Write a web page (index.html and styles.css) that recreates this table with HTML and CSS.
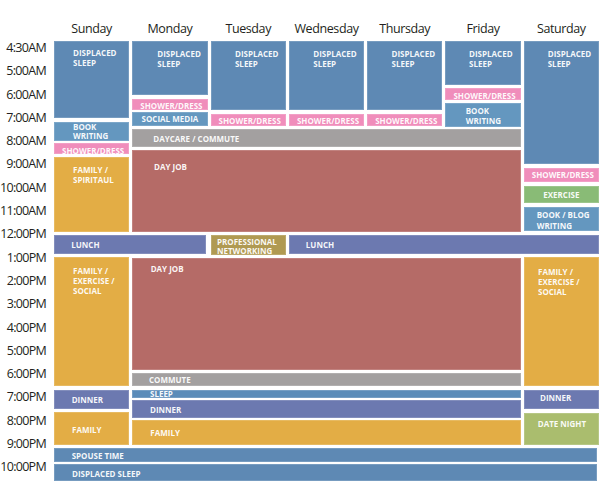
FILE: index.html
```html
<!DOCTYPE html>
<html lang="en">
<head>
<meta charset="utf-8">
<title>Weekly schedule</title>
<link rel="stylesheet" href="styles.css">
</head>
<body>
<div class="page">
  <div class="corner"></div>
  <div class="days">
    <div>Sunday</div><div>Monday</div><div>Tuesday</div><div>Wednesday</div><div>Thursday</div><div>Friday</div><div>Saturday</div>
  </div>
  <div class="times">
    <div>4:30AM</div><div>5:00AM</div><div>6:00AM</div><div>7:00AM</div><div>8:00AM</div><div>9:00AM</div><div>10:00AM</div><div>11:00AM</div><div>12:00PM</div><div>1:00PM</div><div>2:00PM</div><div>3:00PM</div><div>4:00PM</div><div>5:00PM</div><div>6:00PM</div><div>7:00PM</div><div>8:00PM</div><div>9:00PM</div><div>10:00PM</div>
  </div>
  <div class="board">
    <div class="blk c-sleep sun-sleep">DISPLACED<br>SLEEP</div>
    <div class="blk c-write sun-book">BOOK<br>WRITING</div>
    <div class="blk c-pink shower sun-shower">SHOWER/DRESS</div>
    <div class="blk c-gold sun-fam1">FAMILY /<br>SPIRITAUL</div>
    <div class="blk c-purple lunch-a">LUNCH</div>
    <div class="blk c-gold sun-fam2">FAMILY /<br>EXERCISE /<br>SOCIAL</div>
    <div class="blk c-purple sun-dinner">DINNER</div>
    <div class="blk c-gold sun-family">FAMILY</div>

    <div class="blk c-sleep mon-sleep">DISPLACED<br>SLEEP</div>
    <div class="blk c-pink shower mon-shower">SHOWER/DRESS</div>
    <div class="blk c-write mon-social">SOCIAL MEDIA</div>

    <div class="blk c-sleep mid-sleep tue">DISPLACED<br>SLEEP</div>
    <div class="blk c-pink shower mid-shower tue">SHOWER/DRESS</div>
    <div class="blk c-sleep mid-sleep wed">DISPLACED<br>SLEEP</div>
    <div class="blk c-pink shower mid-shower wed">SHOWER/DRESS</div>
    <div class="blk c-sleep mid-sleep thu">DISPLACED<br>SLEEP</div>
    <div class="blk c-pink shower mid-shower thu">SHOWER/DRESS</div>

    <div class="blk c-sleep fri-sleep">DISPLACED<br>SLEEP</div>
    <div class="blk c-pink shower fri-shower">SHOWER/DRESS</div>
    <div class="blk c-write fri-book">BOOK<br>WRITING</div>

    <div class="blk c-sleep sat-sleep">DISPLACED<br>SLEEP</div>
    <div class="blk c-pink shower sat-shower">SHOWER/DRESS</div>
    <div class="blk c-green sat-exercise">EXERCISE</div>
    <div class="blk c-write sat-book">BOOK / BLOG<br>WRITING</div>

    <div class="blk c-gray daycare">DAYCARE / COMMUTE</div>
    <div class="blk c-red dayjob-am">DAY JOB</div>
    <div class="blk c-olive networking">PROFESSIONAL<br>NETWORKING</div>
    <div class="blk c-purple lunch-b">LUNCH</div>
    <div class="blk c-red dayjob-pm">DAY JOB</div>
    <div class="blk c-gray commute">COMMUTE</div>
    <div class="blk c-evsleep ev-sleep">SLEEP</div>
    <div class="blk c-purple wk-dinner">DINNER</div>
    <div class="blk c-gold wk-family">FAMILY</div>

    <div class="blk c-gold sat-fam">FAMILY /<br>EXERCISE /<br>SOCIAL</div>
    <div class="blk c-purple sat-dinner">DINNER</div>
    <div class="blk c-lime sat-date">DATE NIGHT</div>

    <div class="blk c-sleep spouse">SPOUSE TIME</div>
    <div class="blk c-sleep night-sleep">DISPLACED SLEEP</div>
  </div>
</div>
</body>
</html>
```
FILE: styles.css
```css
* { box-sizing: border-box; }

body {
  margin: 0;
  background: #ffffff;
  font-family: "Open Sans", "DejaVu Sans", sans-serif;
  color: #231f20;
}

.page {
  display: grid;
  grid-template-columns: 46px 545px;
  column-gap: 8px;
  padding-top: 20.6px;
}

.days {
  display: grid;
  grid-template-columns: repeat(7, 1fr);
  column-gap: 3px;
  height: 20.4px;
  font-size: 12.5px;
  line-height: 15px;
  letter-spacing: -0.4px;
  text-align: center;
}

.times {
  margin-top: -5px;
  font-size: 12.5px;
  letter-spacing: -0.7px;
  text-align: right;
}

.times div {
  height: 23.3px;
  line-height: 23.3px;
  white-space: nowrap;
}

.board {
  display: grid;
  grid-template-columns: repeat(7, 1fr);
  grid-template-rows: repeat(440, 1px);
  column-gap: 3px;
}

.blk {
  font-weight: 700;
  font-size: 8px;
  line-height: 10px;
  color: rgba(255, 255, 255, 0.94);
  white-space: nowrap;
  box-shadow: inset 0 0 0 1px rgba(255, 255, 255, 0.16);
}

/* colours */
.c-sleep { background: #5e89b4; }
.c-evsleep { background: #5b8cb9; }
.c-write { background: #6497bf; }
.c-pink { background: #f08dbb; }
.c-gray { background: #a3a0a0; }
.c-red { background: #b56b67; }
.c-purple { background: #6c79b0; }
.c-gold { background: #e3ad45; }
.c-olive { background: #b09a52; }
.c-green { background: #89bb76; }
.c-lime { background: #aabd6e; }

.shower { text-align: center; padding-left: 3px; }

/* Sunday */
.sun-sleep { grid-column: 1; grid-row: 1 / 78; padding-top: 6.6px; padding-left: 19px; }
.sun-book { grid-column: 1; grid-row: 82 / 101; padding-top: 0; padding-left: 19px; line-height: 9px; }
.sun-shower { grid-column: 1; grid-row: 103 / 114; padding-top: 2.6px; }
.sun-fam1 { grid-column: 1; grid-row: 117 / 192; padding-top: 8px; padding-left: 19px; }
.lunch-a { grid-column: 1 / 3; grid-row: 195 / 214; padding-top: 4.6px; padding-left: 17.3px; margin-right: 1.5px; }
.sun-fam2 { grid-column: 1; grid-row: 217 / 346; padding-top: 8.6px; padding-left: 19px; line-height: 10.3px; }
.sun-dinner { grid-column: 1; grid-row: 350 / 369; padding-top: 4.9px; padding-left: 17.7px; }
.sun-family { grid-column: 1; grid-row: 372 / 405; padding-top: 12.9px; padding-left: 18px; }

/* Monday */
.mon-sleep { grid-column: 2; grid-row: 1 / 55; padding-top: 7.6px; padding-left: 25px; }
.mon-shower { grid-column: 2; grid-row: 59 / 70; padding-top: 1.9px; }
.mon-social { grid-column: 2; grid-row: 72 / 86; padding-top: 2.3px; text-align: center; }

/* Tuesday - Thursday */
.mid-sleep { grid-row: 1 / 70; padding-top: 7.6px; padding-left: 24.4px; }
.mid-shower { grid-row: 74 / 86; padding-top: 1.9px; }
.tue { grid-column: 3; }
.wed { grid-column: 4; }
.thu { grid-column: 5; }

/* Friday */
.fri-sleep { grid-column: 6; grid-row: 1 / 45; padding-top: 7.6px; padding-left: 23.6px; }
.fri-shower { grid-column: 6; grid-row: 48 / 60; padding-top: 2.6px; }
.fri-book { grid-column: 6; grid-row: 63 / 87; padding-top: 3.3px; padding-left: 20.3px; }

/* Saturday */
.sat-sleep { grid-column: 7; grid-row: 1 / 124; padding-top: 7.6px; padding-left: 24px; }
.sat-shower { grid-column: 7; grid-row: 128 / 142; padding-top: 1.9px; }
.sat-exercise { grid-column: 7; grid-row: 146 / 163; padding-top: 4.3px; text-align: center; }
.sat-book { grid-column: 7; grid-row: 167 / 191; padding-top: 3.3px; padding-left: 13px; line-height: 10.3px; }
.sat-fam { grid-column: 7; grid-row: 217 / 346; padding-top: 9.9px; padding-left: 14.3px; line-height: 10.3px; }
.sat-dinner { grid-column: 7; grid-row: 350 / 369; padding-top: 3.3px; padding-left: 16.3px; }
.sat-date { grid-column: 7; grid-row: 373 / 405; padding-top: 6.3px; padding-left: 14px; }

/* Weekday spans */
.daycare { grid-column: 2 / 7; grid-row: 89 / 107; padding-top: 4.6px; padding-left: 21px; }
.dayjob-am { grid-column: 2 / 7; grid-row: 110 / 192; padding-top: 12.3px; padding-left: 21.7px; }
.networking { grid-column: 3; grid-row: 195 / 215; padding-top: 1.8px; padding-left: 6.4px; line-height: 9px; }
.lunch-b { grid-column: 4 / 8; grid-row: 195 / 214; padding-top: 5.3px; padding-left: 17px; }
.dayjob-pm { grid-column: 2 / 7; grid-row: 218 / 330; padding-top: 6.3px; padding-left: 18.4px; }
.commute { grid-column: 2 / 7; grid-row: 333 / 346; padding-top: 1.9px; padding-left: 16.7px; }
.ev-sleep { grid-column: 2 / 7; grid-row: 350 / 358; padding-top: 0; padding-left: 17.7px; line-height: 8px; }
.wk-dinner { grid-column: 2 / 7; grid-row: 360 / 378; padding-top: 4.9px; padding-left: 17.7px; }
.wk-family { grid-column: 2 / 7; grid-row: 380 / 405; padding-top: 7.9px; padding-left: 18px; }

/* Whole week */
.spouse { grid-column: 1 / -1; grid-row: 408 / 422; padding-top: 2.6px; padding-left: 17.7px; margin-right: 2px; }
.night-sleep { grid-column: 1 / -1; grid-row: 424 / 441; padding-top: 4.9px; padding-left: 18px; margin-right: 1.5px; }
```
